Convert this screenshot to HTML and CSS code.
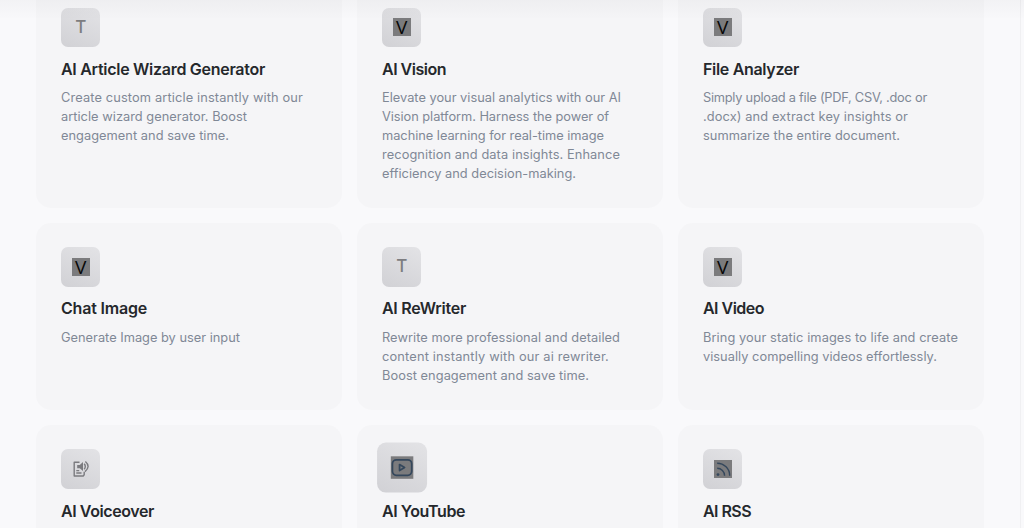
FILE: index.html
```html
<!DOCTYPE html>
<html lang="en">
<head>
<meta charset="utf-8">
<title>AI Tools</title>
<link rel="stylesheet" href="styles.css">
</head>
<body>
<main class="page">
<div class="grid">
  <article class="card">
    <div class="icon letter">T</div>
    <h2><span class="fit" data-width="204">AI Article Wizard Generator</span></h2>
    <p><span class="fit" data-width="242">Create custom article instantly with our</span><span class="fit" data-width="186">article wizard generator. Boost</span><span class="fit" data-width="168">engagement and save time.</span></p>
  </article>
  <article class="card">
    <div class="icon"><span class="tile">V</span></div>
    <h2><span class="fit" data-width="64">AI Vision</span></h2>
    <p><span class="fit" data-width="239">Elevate your visual analytics with our AI</span><span class="fit" data-width="227">Vision platform. Harness the power of</span><span class="fit" data-width="222">machine learning for real-time image</span><span class="fit" data-width="238">recognition and data insights. Enhance</span><span class="fit" data-width="194">efficiency and decision-making.</span></p>
  </article>
  <article class="card">
    <div class="icon"><span class="tile">V</span></div>
    <h2><span class="fit" data-width="96">File Analyzer</span></h2>
    <p><span class="fit" data-width="224">Simply upload a file (PDF, CSV, .doc or</span><span class="fit" data-width="205">.docx) and extract key insights or</span><span class="fit" data-width="197">summarize the entire document.</span></p>
  </article>
  <article class="card">
    <div class="icon"><span class="tile">V</span></div>
    <h2><span class="fit" data-width="86">Chat Image</span></h2>
    <p><span class="fit" data-width="179">Generate Image by user input</span></p>
  </article>
  <article class="card">
    <div class="icon letter">T</div>
    <h2><span class="fit" data-width="84">AI ReWriter</span></h2>
    <p><span class="fit" data-width="238">Rewrite more professional and detailed</span><span class="fit" data-width="227">content instantly with our ai rewriter.</span><span class="fit" data-width="207">Boost engagement and save time.</span></p>
  </article>
  <article class="card">
    <div class="icon"><span class="tile">V</span></div>
    <h2><span class="fit" data-width="61">AI Video</span></h2>
    <p><span class="fit" data-width="255">Bring your static images to life and create</span><span class="fit" data-width="234">visually compelling videos effortlessly.</span></p>
  </article>
  <article class="card">
    <div class="icon">
      <svg class="voice" viewBox="0 0 18 18"><path d="M7.5 2.2H2.2V16H11.2L12.2 14.8V11.8M4.3 10.6H7.2M4.3 13H9.5"/><path class="solid" d="M5.2 4.9H7.8L11 2V11L7.8 8.3H5.2Z"/><path d="M12.2 3.8Q14.4 6.6 12.2 9.2M13.4 1.5Q19 6.5 13 11.6"/></svg>
    </div>
    <h2><span class="fit" data-width="93">AI Voiceover</span></h2>
  </article>
  <article class="card">
    <div class="icon active">
      <span class="tile"><svg viewBox="0 0 18 18"><rect x="1.3" y="2.8" width="15.4" height="12.4" rx="3.2"/><path d="M7 6.6V11.4L11 9Z"/></svg></span>
    </div>
    <h2><span class="fit" data-width="83">AI YouTube</span></h2>
  </article>
  <article class="card">
    <div class="icon">
      <span class="tile"><svg viewBox="0 0 18 18"><path d="M3.2 3.2A12.5 12.5 0 0 1 15.7 15.7M3.2 8.3A7.4 7.4 0 0 1 10.6 15.7"/><circle class="dot" cx="4" cy="14.6" r="1.4"/></svg></span>
    </div>
    <h2><span class="fit" data-width="48">AI RSS</span></h2>
  </article>
</div>
</main>
<div class="topshade"></div>
<script src="fit.js"></script>
</body>
</html>
```
FILE: styles.css
```css
* { box-sizing: border-box; }
body {
  margin: 0;
  height: 528px;
  overflow: hidden;
  background: #f9f9fb;
  font-family: Inter, "Liberation Sans", sans-serif;
}
.page {
  width: 1021px;
  height: 528px;
  overflow: hidden;
  border-right: 1px solid #f0f0f2;
}
.grid {
  display: grid;
  grid-template-columns: repeat(3, 306px);
  grid-template-rows: 225px 187.5px 187.5px;
  gap: 15px;
  margin: -17.4px 0 0 36.3px;
}
.card {
  padding: 25px 24.7px;
  border-radius: 15px;
  background: #f5f5f7;
}
.card:nth-child(n+4) { padding-top: 24.4px; }
.card:nth-child(n+7) { padding-top: 24px; }
.icon {
  display: flex;
  align-items: center;
  justify-content: center;
  width: 39.5px;
  height: 39.5px;
  border-radius: 7px;
  background: linear-gradient(25deg, #d1d1d5, #e3e3e6);
}
.active { transform: translateY(-1.5px) scale(1.25); }
.letter {
  color: #7d7d80;
  font: 500 17px/1 Inter, sans-serif;
}
.tile {
  display: flex;
  align-items: center;
  justify-content: center;
  width: 18px;
  height: 18px;
  background: #7b7b7d;
  color: #080808;
  font: 400 19px/18px "Open Sans", sans-serif;
}
svg {
  width: 18px;
  height: 18px;
  fill: none;
  stroke: #34475c;
  stroke-width: 1.4;
  stroke-linejoin: round;
}
.dot { fill: #34475c; stroke: none; }
.voice { stroke: #7b7b7f; }
.solid { fill: #7b7b7f; stroke: none; }
h2 {
  margin: 12px 0 0;
  color: #25282c;
  font-size: 16px;
  font-weight: 600;
  line-height: 20px;
}
.card:nth-child(n+4) h2 { margin-top: 11.6px; }
.card:nth-child(n+7) h2 { margin-top: 12.2px; }
.card:nth-child(n+4) p { margin-top: 10.6px; }
p {
  margin: 10px 0 0;
  color: #808896;
  font-size: 12.8px;
  line-height: 18.9px;
}
.fit {
  display: block;
  width: max-content;
  white-space: pre;
}
.topshade {
  position: absolute;
  inset: 0 0 auto;
  height: 18px;
  background: linear-gradient(rgba(40, 40, 50, .03), rgba(40, 40, 50, .005));
}
```
FILE: fit.js
```js
// Track each line so its width follows the design's measure.
for (const line of document.querySelectorAll('.fit')) {
  const extra = Number(line.dataset.width) - line.getBoundingClientRect().width;
  line.style.letterSpacing = extra / line.textContent.length + 'px';
}
```
